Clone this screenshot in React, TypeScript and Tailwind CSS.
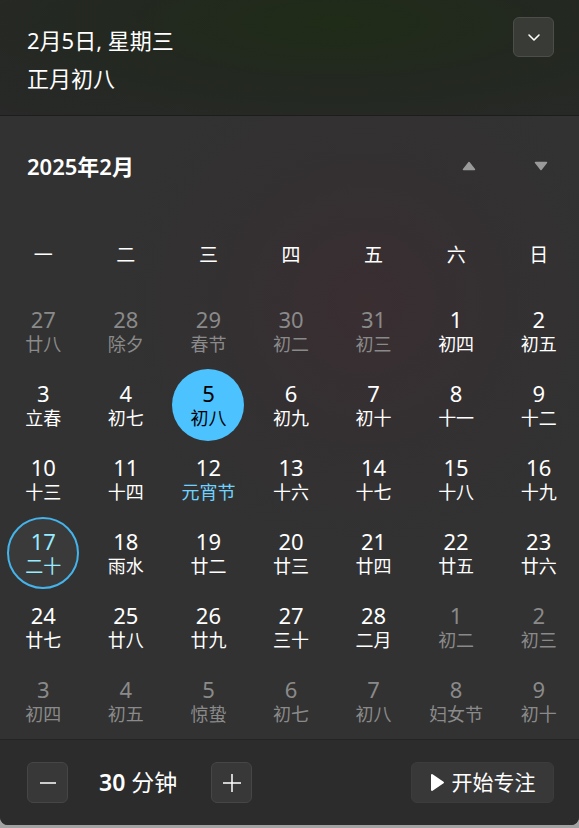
import React from "react";

type Day = { n: number; l: string; o?: boolean; today?: boolean; ring?: boolean; fest?: boolean };

const weeks: Day[][] = [
  [
    { n: 27, l: "廿八", o: true },
    { n: 28, l: "除夕", o: true },
    { n: 29, l: "春节", o: true },
    { n: 30, l: "初二", o: true },
    { n: 31, l: "初三", o: true },
    { n: 1, l: "初四" },
    { n: 2, l: "初五" },
  ],
  [
    { n: 3, l: "立春" },
    { n: 4, l: "初七" },
    { n: 5, l: "初八", today: true },
    { n: 6, l: "初九" },
    { n: 7, l: "初十" },
    { n: 8, l: "十一" },
    { n: 9, l: "十二" },
  ],
  [
    { n: 10, l: "十三" },
    { n: 11, l: "十四" },
    { n: 12, l: "元宵节", fest: true },
    { n: 13, l: "十六" },
    { n: 14, l: "十七" },
    { n: 15, l: "十八" },
    { n: 16, l: "十九" },
  ],
  [
    { n: 17, l: "二十", ring: true },
    { n: 18, l: "雨水" },
    { n: 19, l: "廿二" },
    { n: 20, l: "廿三" },
    { n: 21, l: "廿四" },
    { n: 22, l: "廿五" },
    { n: 23, l: "廿六" },
  ],
  [
    { n: 24, l: "廿七" },
    { n: 25, l: "廿八" },
    { n: 26, l: "廿九" },
    { n: 27, l: "三十" },
    { n: 28, l: "二月" },
    { n: 1, l: "初二", o: true },
    { n: 2, l: "初三", o: true },
  ],
  [
    { n: 3, l: "初四", o: true },
    { n: 4, l: "初五", o: true },
    { n: 5, l: "惊蛰", o: true },
    { n: 6, l: "初七", o: true },
    { n: 7, l: "初八", o: true },
    { n: 8, l: "妇女节", o: true },
    { n: 9, l: "初十", o: true },
  ],
];

const weekdays = ["一", "二", "三", "四", "五", "六", "日"];

const DayCell: React.FC<{ d: Day }> = ({ d }) => {
  let box = "";
  let num = "text-white";
  let lunar = "text-white";
  if (d.o) {
    num = "text-[#8a8a8a]";
    lunar = "text-[#8a8a8a]";
  }
  if (d.fest) lunar = "text-[#6fd3ff]";
  if (d.today) {
    box = "bg-[#4cc2ff]";
    num = "text-black";
    lunar = "text-black";
  }
  if (d.ring) {
    box = "border-2 border-[#44b4ec] bg-[#3a3a3a]";
    num = "text-[#99ebff]";
    lunar = "text-[#99ebff]";
  }
  return (
    <div className="flex items-center justify-center">
      <div className={`flex h-[72px] w-[72px] flex-col items-center justify-center rounded-full ${box}`}>
        <span className={`text-[22px] leading-[25px] ${num}`}>{d.n}</span>
        <span className={`text-[18px] leading-[24px] ${lunar}`}>{d.l}</span>
      </div>
    </div>
  );
};

export default function App() {
  return (
    <div
      className="h-[828px] w-[579px] bg-[#a3a3a3]"
      style={{ fontFamily: '"Noto Sans", "Noto Sans CJK SC", sans-serif' }}
    >
      <div className="flex h-[825px] flex-col overflow-hidden rounded-b-[8px] bg-[#323232]">
        {/* header */}
        <div className="flex h-[116px] shrink-0 items-start justify-between border-b border-[#1d1d1d] bg-[radial-gradient(ellipse_at_58%_20%,#1f2c17_0%,#232820_45%,#282928_100%)] pl-[27px] pr-[25px] pt-[17px]">
          <div className="pt-[4px] text-[22px] leading-[38px] text-white">
            <div>2月5日, 星期三</div>
            <div>正月初八</div>
          </div>
          <button className="flex h-[40px] w-[41px] items-center justify-center rounded-[6px] border border-[#4c4e4a] bg-[#393b37]">
            <svg width="14" height="9" viewBox="0 0 14 9" fill="none">
              <path d="M2 2l5 5 5-5" stroke="white" strokeWidth="1.6" strokeLinecap="round" strokeLinejoin="round" />
            </svg>
          </button>
        </div>

        {/* body */}
        <div className="flex-1 bg-[radial-gradient(circle_at_63%_30%,#3a2e31_0%,#343032_22%,#323232_45%)]">
          <div className="mt-[25px] flex h-[50px] items-center justify-between pl-[27px] pr-[2px]">
            <span className="text-[22px] font-semibold text-white">2025年2月</span>
            <div className="flex items-center">
              <div className="flex w-[72px] justify-center">
                <svg width="14" height="10" viewBox="0 0 14 10">
                  <path d="M7 1.5L12.5 8.5H1.5Z" fill="#9a9a9a" stroke="#9a9a9a" strokeWidth="1.5" strokeLinejoin="round" />
                </svg>
              </div>
              <div className="flex w-[72px] justify-center">
                <svg width="14" height="10" viewBox="0 0 14 10">
                  <path d="M7 8.5L12.5 1.5H1.5Z" fill="#9a9a9a" stroke="#9a9a9a" strokeWidth="1.5" strokeLinejoin="round" />
                </svg>
              </div>
            </div>
          </div>

          <div className="ml-[2px] mt-[44px] grid h-[40px] w-[578px] grid-cols-7">
            {weekdays.map((w) => (
              <div key={w} className="flex items-center justify-center text-[19px] text-white">
                {w}
              </div>
            ))}
          </div>

          <div className="ml-[2px] mt-[19px] w-[578px]">
            {weeks.map((row, i) => (
              <div key={i} className="grid h-[74px] grid-cols-7">
                {row.map((d, j) => (
                  <DayCell key={j} d={d} />
                ))}
              </div>
            ))}
          </div>
        </div>

        {/* footer */}
        <div className="flex h-[86px] shrink-0 items-center justify-between border-t border-[#242424] bg-[#2c2c2c] pl-[27px] pr-[25px]">
          <div className="flex items-center">
            <button className="flex h-[41px] w-[41px] items-center justify-center rounded-[6px] border border-[#464646] bg-[#383838]">
              <svg width="16" height="2" viewBox="0 0 16 2">
                <path d="M0 1h16" stroke="white" strokeWidth="1.5" />
              </svg>
            </button>
            <div className="ml-[31px] w-[112px] text-[23px] text-white">
              <span className="font-semibold">30</span> 分钟
            </div>
            <button className="flex h-[41px] w-[41px] items-center justify-center rounded-[6px] border border-[#464646] bg-[#383838]">
              <svg width="18" height="18" viewBox="0 0 18 18">
                <path d="M0 9h18M9 0v18" stroke="white" strokeWidth="1.5" />
              </svg>
            </button>
          </div>
          <button className="flex h-[41px] w-[143px] items-center justify-center gap-[7px] rounded-[6px] border border-[#3c3c3c] bg-[#383838] text-[21px] text-white">
            <svg width="15" height="19" viewBox="0 0 15 19">
              <path d="M2 2L13 9.5L2 17Z" fill="white" stroke="white" strokeWidth="2" strokeLinejoin="round" />
            </svg>
            开始专注
          </button>
        </div>
      </div>
    </div>
  );
}
